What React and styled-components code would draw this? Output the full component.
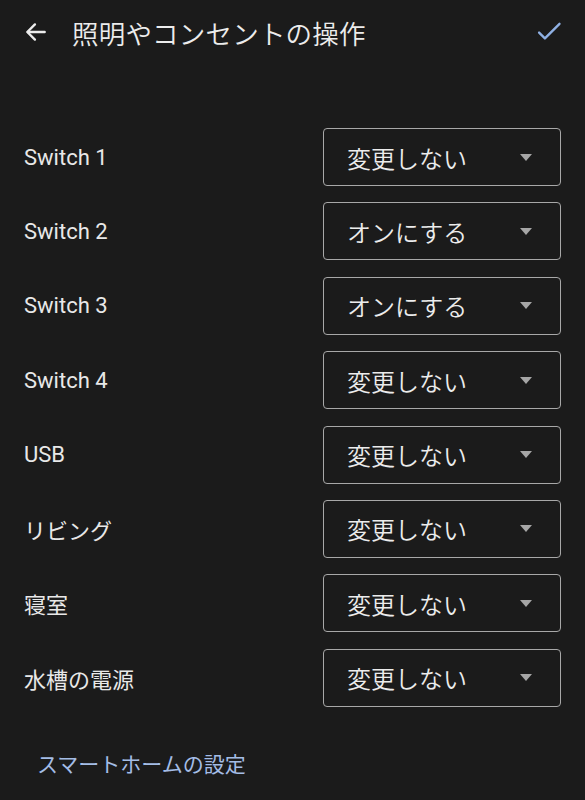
import React, { useState } from 'react';
import styled, { createGlobalStyle } from 'styled-components';

const GlobalStyle = createGlobalStyle`
  html, body {
    margin: 0;
    padding: 0;
    background: #1b1b1b;
  }
  body {
    font-family: Roboto, "Noto Sans CJK JP", sans-serif;
    color: #e6e6e6;
  }
`;

const Page = styled.div`
  width: 585px;
  height: 800px;
  background: #1b1b1b;
  overflow: hidden;
`;

const Header = styled.div`
  display: flex;
  align-items: center;
  height: 64px;
  padding: 0 22px 0 22px;
`;

const IconButton = styled.button`
  display: flex;
  align-items: center;
  justify-content: center;
  background: none;
  border: none;
  padding: 0;
  width: 28px;
  height: 28px;
  cursor: pointer;
`;

const Title = styled.h1`
  flex: 1;
  margin: 0 0 0 22px;
  font-size: 26.5px;
  font-weight: 350;
  color: #ececec;
  letter-spacing: 0.2px;
`;

const List = styled.div`
  display: flex;
  flex-direction: column;
  gap: 16.4px;
  padding: 64px 24px 0 24px;
`;

const Row = styled.div`
  display: flex;
  align-items: center;
  justify-content: space-between;
`;

const Label = styled.div`
  font-size: 22px;
  color: #e8e8e8;
`;

const Select = styled.div`
  display: flex;
  align-items: center;
  justify-content: space-between;
  box-sizing: border-box;
  width: 238px;
  height: 58px;
  padding: 0 28px 0 23px;
  border: 1px solid #a8a8a8;
  border-radius: 4px;
  font-size: 24px;
  font-weight: 350;
  color: #ececec;
  cursor: pointer;
`;

const Caret = styled.span`
  width: 0;
  height: 0;
  border-left: 6.5px solid transparent;
  border-right: 6.5px solid transparent;
  border-top: 7px solid #a6a6a6;
`;

const Footer = styled.a`
  display: block;
  margin: 41px 0 0 37px;
  font-size: 21px;
  color: #a4bde6;
  text-decoration: none;
`;

const rows = [
  ['Switch 1', '変更しない'],
  ['Switch 2', 'オンにする'],
  ['Switch 3', 'オンにする'],
  ['Switch 4', '変更しない'],
  ['USB', '変更しない'],
  ['リビング', '変更しない'],
  ['寝室', '変更しない'],
  ['水槽の電源', '変更しない'],
];

export default function App() {
  const [items] = useState(rows);
  return (
    <Page>
      <GlobalStyle />
      <Header>
        <IconButton aria-label="back">
          <svg width="26" height="26" viewBox="0 0 24 24" fill="none" stroke="#ececec" strokeWidth="2.2" strokeLinecap="round" strokeLinejoin="round">
            <path d="M20 12H4.5" />
            <path d="M11 5l-7 7 7 7" />
          </svg>
        </IconButton>
        <Title>照明やコンセントの操作</Title>
        <IconButton aria-label="save">
          <svg width="28" height="28" viewBox="0 0 24 24" fill="none" stroke="#8fb0e3" strokeWidth="2" strokeLinecap="round" strokeLinejoin="round">
            <path d="M3.5 12.5l5 5L21 5" />
          </svg>
        </IconButton>
      </Header>
      <List>
        {items.map(([name, value]) => (
          <Row key={name}>
            <Label>{name}</Label>
            <Select>
              <span>{value}</span>
              <Caret />
            </Select>
          </Row>
        ))}
      </List>
      <Footer href="#">スマートホームの設定</Footer>
    </Page>
  );
}
